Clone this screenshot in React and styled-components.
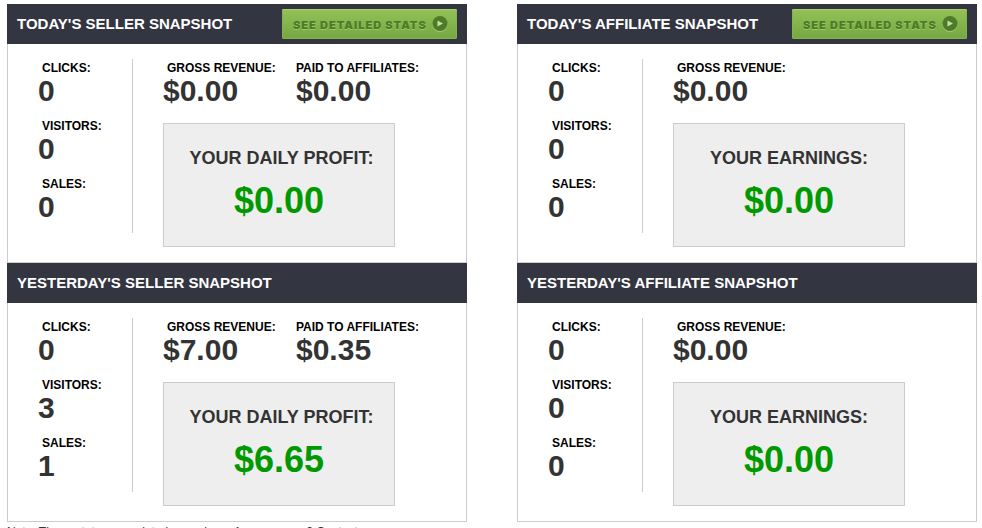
import React from "react";
import styled, { createGlobalStyle } from "styled-components";

const GlobalStyle = createGlobalStyle`
  body {
    margin: 0;
    background: #fff;
    color: #333;
    font-family: "Liberation Sans", Arial, Helvetica, sans-serif;
  }
`;

const sellerSnapshots = [
  {
    title: "Today's Seller Snapshot",
    hasDetails: true,
    counts: { clicks: 0, visitors: 0, sales: 0 },
    amounts: [
      { label: "Gross Revenue:", value: "$0.00", indent: true },
      { label: "Paid to Affiliates:", value: "$0.00" },
    ],
    total: { label: "\u00a0Your Daily Profit:", value: "$0.00" },
  },
  {
    title: "Yesterday's Seller Snapshot",
    counts: { clicks: 0, visitors: 3, sales: 1 },
    amounts: [
      { label: "Gross Revenue:", value: "$7.00", indent: true },
      { label: "Paid to Affiliates:", value: "$0.35" },
    ],
    total: { label: "\u00a0Your Daily Profit:", value: "$6.65" },
  },
];

const affiliateSnapshots = [
  {
    title: "Today's Affiliate Snapshot",
    hasDetails: true,
    counts: { clicks: 0, visitors: 0, sales: 0 },
    amounts: [{ label: "Gross Revenue:", value: "$0.00", indent: true }],
    total: { label: "Your Earnings:", value: "$0.00" },
  },
  {
    title: "Yesterday's Affiliate Snapshot",
    counts: { clicks: 0, visitors: 0, sales: 0 },
    amounts: [{ label: "Gross Revenue:", value: "$0.00", indent: true }],
    total: { label: "Your Earnings:", value: "$0.00" },
  },
];

const Stat = ({ label, value, indent }) => (
  <StyledStat>
    <StatLabel $indent={indent}>{label}</StatLabel>
    <StatValue>{value}</StatValue>
  </StyledStat>
);

const DetailsLink = () => (
  <StyledDetailsLink href="#stats">
    See Detailed Stats
    <svg width="16" height="17" viewBox="0 0 16 17" aria-hidden="true">
      <circle cx="8" cy="8.5" r="7.5" fill="#a5cb72" />
      <circle cx="8" cy="7.5" r="7.5" fill="#4f7b27" />
      <path d="M5.5 4.5 L11 7.5 L5.5 10.5 Z" fill="#c5dea6" />
    </svg>
  </StyledDetailsLink>
);

const Snapshot = ({ title, hasDetails, counts, amounts, total }) => (
  <section>
    <SnapshotHeader>
      <h2>{title}</h2>
      {hasDetails && <DetailsLink />}
    </SnapshotHeader>
    <SnapshotBody>
      <Counts>
        <Stat label="Clicks:" value={counts.clicks} indent />
        <Stat label="Visitors:" value={counts.visitors} indent />
        <Stat label="Sales:" value={counts.sales} indent />
      </Counts>
      <Money>
        <Amounts>
          {amounts.map((amount) => (
            <Stat key={amount.label} {...amount} />
          ))}
        </Amounts>
        <Total>
          <TotalLabel>{total.label}</TotalLabel>
          <TotalValue>{total.value}</TotalValue>
        </Total>
      </Money>
    </SnapshotBody>
  </section>
);

const App = () => (
  <>
    <GlobalStyle />
    <Page>
      <div>
        {sellerSnapshots.map((snapshot) => (
          <Snapshot key={snapshot.title} {...snapshot} />
        ))}
        <Note>Note: These stats are updated every hour. Any concerns? Contact us.</Note>
      </div>
      <div>
        {affiliateSnapshots.map((snapshot) => (
          <Snapshot key={snapshot.title} {...snapshot} />
        ))}
      </div>
    </Page>
  </>
);

const Page = styled.main`
  display: grid;
  grid-template-columns: repeat(2, minmax(0, 1fr));
  gap: 50px;
  height: 100vh;
  box-sizing: border-box;
  padding: 4px 5px 0 7px;
  overflow: hidden;
`;

const SnapshotHeader = styled.header`
  display: flex;
  align-items: center;
  justify-content: space-between;
  height: 40px;
  padding: 0 10px;
  background: #333541;

  h2 {
    margin: 0;
    font-size: 15px;
    line-height: 20px;
    color: #fff;
    text-transform: uppercase;
    white-space: nowrap;
  }
`;

const StyledDetailsLink = styled.a`
  display: flex;
  align-items: center;
  justify-content: space-between;
  box-sizing: border-box;
  width: 175px;
  height: 30px;
  padding: 1px 9px 0 11px;
  border-radius: 2px;
  background: linear-gradient(#93c158, #74a841);
  box-shadow: inset 0 1px 0 #a9d070, inset 0 0 0 1px #82b34c;
  color: #4f7b27;
  font-family: Inter, "Liberation Sans", sans-serif;
  font-size: 11px;
  font-weight: 900;
  letter-spacing: 1px;
  line-height: 14px;
  text-decoration: none;
  text-shadow: 0 1px 0 #a0c86b;
  text-transform: uppercase;
  white-space: nowrap;
`;

const SnapshotBody = styled.div`
  display: flex;
  padding: 15px 30px;
  border: 1px solid #ccc;
  border-top: 0;
`;

const Counts = styled.div`
  flex: none;
  align-self: flex-start;
  width: 94px;
  border-right: 1px solid #ccc;
`;

const Money = styled.div`
  flex: 1;
  min-width: 0;
  padding-left: 30px;
`;

const Amounts = styled.div`
  display: grid;
  grid-template-columns: 133px 1fr;
  margin-bottom: 6px;
`;

const StyledStat = styled.div`
  height: 58px;
`;

const StatLabel = styled.div`
  padding-left: ${(props) => (props.$indent ? "4px" : "0")};
  font-size: 12px;
  font-weight: bold;
  line-height: 18px;
  color: #000;
  text-transform: uppercase;
  white-space: nowrap;
`;

const StatValue = styled.div`
  font-size: 30px;
  font-weight: bold;
  line-height: 28px;
`;

const Total = styled.div`
  box-sizing: border-box;
  width: 232px;
  height: 124px;
  padding-top: 22px;
  border: 1px solid #ccc;
  background: #eee;
  font-weight: bold;
  text-align: center;
`;

const TotalLabel = styled.div`
  font-size: 18px;
  line-height: 24px;
  text-transform: uppercase;
  white-space: nowrap;
`;

const TotalValue = styled.div`
  margin-top: 10px;
  font-size: 36px;
  line-height: 42px;
  color: #090;
`;

const Note = styled.p`
  margin: 3px 0 0;
  font-size: 12px;
  line-height: 14px;
  white-space: nowrap;
`;

export default App;
